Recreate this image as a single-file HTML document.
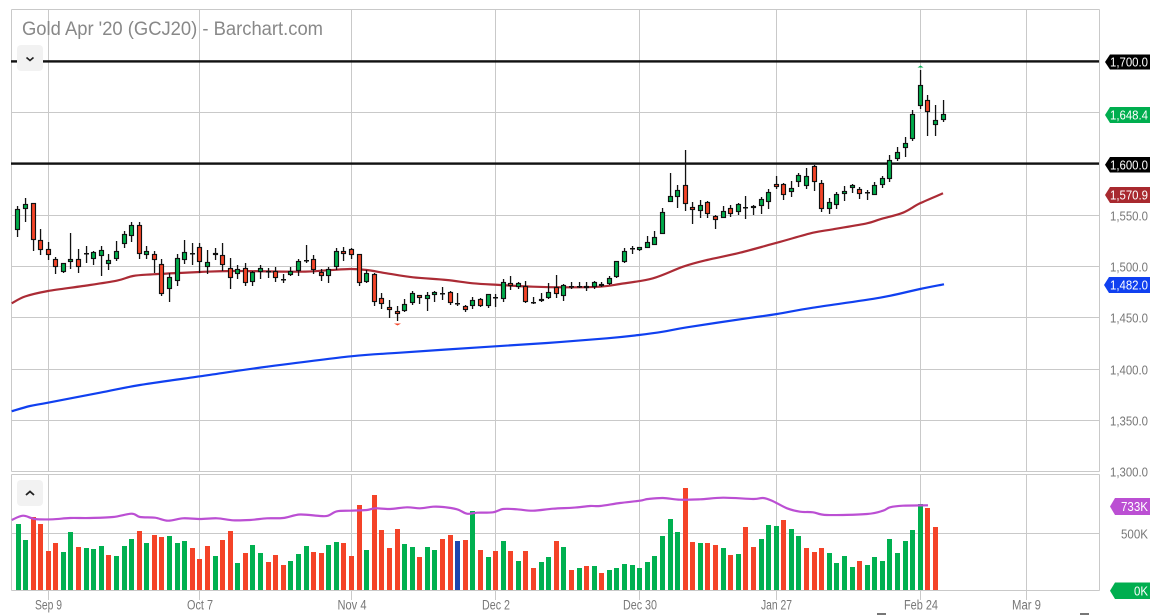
<!DOCTYPE html>
<html>
<head>
<meta charset="utf-8">
<title>Gold Apr '20 (GCJ20) - Barchart.com</title>
<style>
html,body{margin:0;padding:0;background:#fff;width:1158px;height:615px;overflow:hidden}
svg{display:block;position:absolute;left:0;top:0}
text{font-family:"Liberation Sans",Arial,sans-serif}
.ax{font-size:13.5px;fill:#777;text-anchor:middle}
.pr{font-size:13px;fill:#777}
.tg{font-size:13px;fill:#fff}
</style>
</head>
<body>
<svg id="c" width="1158" height="615" viewBox="0 0 1158 615" xmlns="http://www.w3.org/2000/svg">
<g id="grid" stroke="#c9c9c9" stroke-width="1" fill="none" shape-rendering="crispEdges">
<path d="M11.5 9.5H1099.5M11.5 9.5V471.5M1099.5 9.5V471.5M11.5 471.5H1099.5M11.5 474.5H1099.5M11.5 474.5V590.5M1099.5 474.5V590.5M11.5 590.5H1099.5"/>
<path d="M11 61.5H1099M11 112.5H1099M11 163.5H1099M11 215.5H1099M11 266.5H1099M11 317.5H1099M11 369.5H1099M11 420.5H1099M11 533.5H1099"/>
<path d="M48.5 9V471M199.5 9V471M351.5 9V471M495.5 9V471M639.5 9V471M776.5 9V471M920.5 9V471M1026.5 9V471"/>
<path d="M48.5 474V600M199.5 474V600M351.5 474V600M495.5 474V600M639.5 474V600M776.5 474V600M920.5 474V600M1026.5 474V600"/>
</g>
<g id="vol" shape-rendering="crispEdges"></g>
<polyline class="ln" fill="none" stroke="#bb4fd3" stroke-width="2.2" stroke-linejoin="round" points="11.7,520 23,515.7 35,519 53,519.3 70,518 90,518 113,517 131.7,513.7 140,517 155,517.7 168,520.7 183,518.3 200,519 217,518.3 233,520.3 250,520 267,518.3 283,518 300,514.5 320,516 328,515.7 337,511.3 350,510.7 367,510 375,508.3 390,509 407,507.3 420,508.3 433,506.7 443,507 457,509.3 467,513.7 477,512.7 493,512.3 503,509 517,509.3 533,510.7 553,508.7 573,507.7 590,506 600,506 620,503 640,500.7 648,499 663,498 680,499.7 700,499.3 723,497.7 753,499 763,498 772,500.7 787,508.3 800,511.7 813,512.3 827,515 867,514 883,510.7 890,507.3 903,505.7 928,505.3"/>
<rect x="11" y="60.2" width="1088" height="2.4" fill="#111"/>
<rect x="11" y="162.4" width="1088" height="2.4" fill="#111"/>
<polyline class="ln" fill="none" stroke="#ab2b35" stroke-width="2.2" stroke-linejoin="round" points="11.7,303.3 25,296.5 48,291 83,286 116.7,280.7 133,276 153,274.3 200,272 233,271 300,271.7 326.7,270.3 350,269 366.7,270 386.7,273.3 413,277.3 446.7,280 473,283.3 500,285 533,286.7 566.7,287.3 600,286.7 620,284 653,278.3 683,266.7 707,260 740,252.7 777,242.7 813,232.7 833,229.3 867,223.3 880,219.3 903,212.7 920,203.3 943,193.3"/>
<polyline class="ln" fill="none" stroke="#1040f0" stroke-width="2.2" stroke-linejoin="round" points="11.7,411.3 30,406 48,402.7 100,392.7 140,385 200,376.3 267,366.7 351,356.3 400,352.7 480,347.3 547,343 607,338.3 639,335 663,331.7 687,327.3 747,318.3 777,314 813,307.7 880,297.7 920,289 944,284.3"/>
<g id="cand"></g>
<path d="M394 323.5h7l-3.500 2z" fill="#f44528"/>
<path d="M917.5 67.500h6l-3-2z" fill="#00ac4f"/>

<rect x="17" y="45" width="26" height="26" rx="4" fill="#f2f2f2"/>
<rect x="17" y="480" width="26" height="26" rx="4" fill="#f2f2f2"/>
<path d="M26.500 57.500l3.500 3 3.500-3" fill="none" stroke="#222" stroke-width="1.6"/>
<path d="M26 495l4-3.600 4 3.600" fill="none" stroke="#222" stroke-width="1.800"/>

<text x="22" y="35" font-size="19" fill="#888" textLength="301" lengthAdjust="spacingAndGlyphs">Gold Apr '20 (GCJ20) - Barchart.com</text>

<text class="ax" x="48.500" y="609.500" textLength="27" lengthAdjust="spacingAndGlyphs">Sep 9</text>
<text class="ax" x="200" y="609.500" textLength="26" lengthAdjust="spacingAndGlyphs">Oct 7</text>
<text class="ax" x="352" y="609.500" textLength="29" lengthAdjust="spacingAndGlyphs">Nov 4</text>
<text class="ax" x="496" y="609.500" textLength="28" lengthAdjust="spacingAndGlyphs">Dec 2</text>
<text class="ax" x="640" y="609.500" textLength="34" lengthAdjust="spacingAndGlyphs">Dec 30</text>
<text class="ax" x="776.500" y="609.500" textLength="31" lengthAdjust="spacingAndGlyphs">Jan 27</text>
<text class="ax" x="921" y="609.500" textLength="34" lengthAdjust="spacingAndGlyphs">Feb 24</text>
<text class="ax" x="1026.500" y="609.500" textLength="29" lengthAdjust="spacingAndGlyphs">Mar 9</text>
<rect x="877" y="613" width="9" height="2" fill="#777"/>
<rect x="1080" y="613" width="9" height="2" fill="#777"/>

<text class="pr" x="1110" y="220.500" textLength="38" lengthAdjust="spacingAndGlyphs">1,550.0</text>
<text class="pr" x="1110" y="271.500" textLength="38" lengthAdjust="spacingAndGlyphs">1,500.0</text>
<text class="pr" x="1110" y="322.500" textLength="38" lengthAdjust="spacingAndGlyphs">1,450.0</text>
<text class="pr" x="1110" y="374.500" textLength="38" lengthAdjust="spacingAndGlyphs">1,400.0</text>
<text class="pr" x="1110" y="425.500" textLength="38" lengthAdjust="spacingAndGlyphs">1,350.0</text>
<text class="pr" x="1110" y="476.500" textLength="38" lengthAdjust="spacingAndGlyphs">1,300.0</text>
<text class="pr" x="1121" y="538.500" textLength="27" lengthAdjust="spacingAndGlyphs">500K</text>

<path d="M1110 54.500h40v15h-40l-5-7.500z" fill="#000"/>
<text class="tg" x="1110" y="66.700" textLength="38" lengthAdjust="spacingAndGlyphs">1,700.0</text>
<path d="M1110 107h40v16h-40l-5-8z" fill="#00ae4f"/>
<text class="tg" x="1110" y="119.700" textLength="38" lengthAdjust="spacingAndGlyphs">1,648.4</text>
<path d="M1110 157h40v15.500h-40l-5-7.700z" fill="#000"/>
<text class="tg" x="1110" y="169.700" textLength="38" lengthAdjust="spacingAndGlyphs">1,600.0</text>
<path d="M1110 187h40v16h-40l-5-8z" fill="#a8292f"/>
<text class="tg" x="1110" y="199.700" textLength="38" lengthAdjust="spacingAndGlyphs">1,570.9</text>
<path d="M1109 277h41v16h-41l-5-8z" fill="#1040f0"/>
<text class="tg" x="1110" y="289.700" textLength="38" lengthAdjust="spacingAndGlyphs">1,482.0</text>
<path d="M1115 498h35v17h-35l-5-8.500z" fill="#bb4fd3"/>
<text class="tg" x="1121" y="511.200" textLength="27" lengthAdjust="spacingAndGlyphs">733K</text>
<path d="M1115 582.500h35v16.500h-35l-5-8.250z" fill="#00ae4f"/>
<text class="tg" x="1134" y="595.700" textLength="14" lengthAdjust="spacingAndGlyphs">0K</text>
</svg>
<script>
var C=[
[17,206,209,230,237,'g'],[25,198,204,209,222,'g'],[33,203,203,240,251,'r'],[40,229,240,250,255,'r'],[48,242,249,255,260,'r'],[55,257,259,267,274,'r'],[63,263,263,272,273,'g'],[70,233,259,262,269,'g'],[78,249,259,267,273,'r'],[86,246,253,254,263,'d'],
[93,251,252,259,265,'g'],[101,246,250,256,276,'g'],[108,254,260,264,270,'g'],[116,241,251,259,261,'g'],[124,231,234,244,248,'g'],[131,222,225,236,242,'g'],[139,222,225,254,259,'r'],[146,246,251,255,259,'g'],[154,251,254,260,273,'r'],[161,259,264,294,296,'r'],
[169,273,277,289,302,'g'],[177,254,258,281,286,'g'],[184,240,252,260,264,'g'],[192,243,253,254,265,'d'],[199,243,247,262,273,'r'],[207,250,262,267,274,'g'],[215,248,253,255,260,'g'],[222,243,255,265,271,'r'],[230,258,268,278,289,'r'],[237,265,269,274,279,'g'],
[245,263,268,283,286,'r'],[252,271,272,282,286,'g'],[260,265,268,272,279,'g'],[268,268,271,272,278,'d'],[275,267,271,278,282,'r'],[283,274,279,280,283,'d'],[290,267,271,275,276,'g'],[298,259,261,271,276,'g'],[306,245,260,261,263,'d'],[313,255,259,270,274,'r'],
[321,269,272,276,281,'r'],[328,267,269,276,283,'g'],[336,248,251,267,270,'g'],[343,247,251,254,261,'r'],[351,248,249,255,259,'r'],[359,254,254,283,286,'r'],[366,270,273,282,283,'g'],[374,273,274,302,306,'r'],[381,293,298,304,309,'r'],[389,300,307,310,318,'r'],
[397,306,311,314,321,'r'],[404,299,304,311,312,'g'],[412,291,293,303,305,'g'],[419,295,295,298,304,'r'],[427,292,295,299,311,'g'],[434,291,292,295,302,'g'],[442,287,293,294,300,'d'],[450,291,292,303,305,'r'],[457,293,303,304,306,'d'],[465,305,306,310,312,'r'],
[472,297,300,306,309,'g'],[480,298,299,306,307,'r'],[488,294,294,306,308,'g'],[495,294,297,298,307,'d'],[503,279,282,299,302,'g'],[510,276,283,286,290,'r'],[518,282,283,287,289,'g'],[525,281,286,302,303,'r'],[533,297,302,303,304,'d'],[541,293,299,301,302,'g'],
[548,283,292,298,299,'g'],[556,275,287,294,298,'r'],[563,284,285,296,301,'g'],[571,282,286,287,289,'d'],[579,282,286,287,288,'d'],[586,282,286,288,291,'r'],[594,281,282,287,289,'g'],[601,282,284,286,287,'r'],[609,276,278,284,285,'g'],[616,261,261,277,278,'g'],
[624,248,251,262,263,'g'],[632,246,248,249,254,'d'],[639,247,247,250,251,'g'],[647,236,242,248,248,'g'],[654,231,237,245,245,'g'],[662,208,212,234,234,'g'],[670,173,196,202,202,'g'],[677,185,190,197,208,'g'],[685,150,185,204,211,'r'],[692,202,207,210,224,'r'],
[700,200,205,211,218,'g'],[707,201,202,214,218,'r'],[715,215,216,220,229,'r'],[723,206,211,218,218,'g'],[730,205,208,214,217,'r'],[738,203,204,212,215,'g'],[745,196,207,208,219,'d'],[753,205,206,208,215,'r'],[761,197,199,206,214,'g'],[768,189,192,202,209,'g'],
[776,176,184,187,189,'r'],[783,183,184,195,200,'r'],[791,181,188,192,197,'g'],[798,173,175,182,187,'g'],[806,168,176,186,189,'g'],[814,165,166,182,191,'r'],[821,180,183,209,212,'r'],[829,198,202,209,214,'g'],[836,192,194,205,209,'g'],[844,186,191,194,201,'g'],
[852,184,185,188,193,'g'],[859,187,189,194,199,'r'],[867,190,192,193,200,'d'],[874,182,185,195,195,'g'],[882,176,178,185,188,'g'],[889,155,160,179,182,'g'],[897,147,152,159,161,'g'],[905,137,143,148,157,'g'],[912,110,114,139,141,'g'],[920,70,85,106,109,'g'],
[927,95,100,112,136,'r'],[935,105,120,125,136,'g'],[943,100,114,120,122,'g']];
var V=[524,540,-517,-524,-551,-543,552,532,-547,548,549,546,-555,556,546,539,-531,543,-535,-537,536,543,541,-548,-559,-546,556,-540,-531,563,-553,545,553,-562,-555,-565,561,554,
546,-552,-553,545,542,-543,-556,-505,550,-495,-530,-548,-529,544,547,-557,547,550,-539,-535,-541,-540,511,-550,557,-551,541,-551,561,-551,-568,562,557,-541,547,-570,568,-566,566,-573,
570,568,564,565,568,562,556,536,519,532,-488,-542,543,-543,-545,548,-555,554,-527,-547,539,525,526,-520,529,536,-548,-552,-548,553,563,556,567,-561,565,557,561,539,553,541,530,504,-508,-527];
var h='',G='#00ac4b',R='#f44528',i,v,x,t;
for(i=0;i<V.length;i++){
 v=V[i];t=Math.abs(v);x=C[i][0]-2;if(i==0)x=16;
 h+='<rect x="'+x+'" y="'+t+'" width="5" height="'+(590-t)+'" fill="'+(i==58?'#1f47b0':(v<0?'#f44328':'#00b050'))+'"/>';
}
document.getElementById('vol').innerHTML=h;
h='';
for(i=0;i<C.length;i++){
 var c=C[i];x=c[0];
 h+='<rect x="'+(x-.1)+'" y="'+c[1]+'" width="1.3" height="'+(c[4]-c[1])+'" fill="#111"/>';
 if(c[5]=='d'){
  h+='<rect x="'+(x-2)+'" y="'+c[2]+'" width="5" height="'+Math.max(1.5,c[3]-c[2])+'" fill="#111"/>';
 }else{
  h+='<rect x="'+(x-1.5)+'" y="'+(c[2]+.5)+'" width="4" height="'+(c[3]-c[2]-1)+'" fill="'+(c[5]=='g'?G:R)+'" stroke="#111" stroke-width="1.15"/>';
 }
}
document.getElementById('cand').innerHTML=h;
/* smooth the indicator lines */
var L=document.querySelectorAll('polyline.ln');
for(i=0;i<L.length;i++){
 var p=L[i].getAttribute('points').split(' ').map(function(s){return s.split(',').map(Number)});
 var d='M'+p[0][0]+' '+p[0][1];
 for(var j=0;j<p.length-1;j++){
  var a=p[j>0?j-1:j],b=p[j],e=p[j+1],f=p[j+2<p.length?j+2:j+1];
  d+='C'+(b[0]+(e[0]-a[0])/6).toFixed(1)+' '+(b[1]+(e[1]-a[1])/6).toFixed(1)+' '+(e[0]-(f[0]-b[0])/6).toFixed(1)+' '+(e[1]-(f[1]-b[1])/6).toFixed(1)+' '+e[0]+' '+e[1];
 }
 var n=document.createElementNS('http://www.w3.org/2000/svg','path');
 n.setAttribute('d',d);n.setAttribute('fill','none');n.setAttribute('stroke',L[i].getAttribute('stroke'));n.setAttribute('stroke-width',L[i].getAttribute('stroke-width'));
 L[i].parentNode.replaceChild(n,L[i]);
}
</script>
</body>
</html>
